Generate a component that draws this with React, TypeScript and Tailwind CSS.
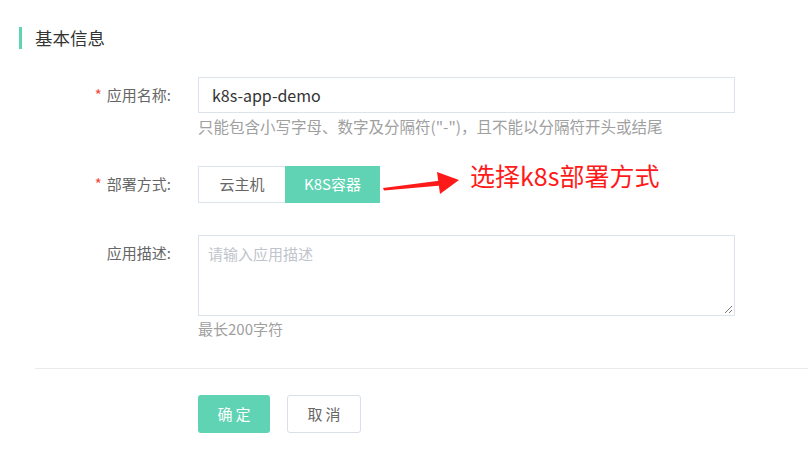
import React from 'react';

const font = { fontFamily: '"Noto Sans CJK SC", "Noto Sans", sans-serif' };

const Label: React.FC<{ text: string; required?: boolean }> = ({ text, required }) => (
  <div className="w-[198px] shrink-0 pr-[27px] flex justify-end items-center h-9 text-[15px] text-[#666]">
    {required && <span className="text-[#f5483b] mr-[5px]">*</span>}
    <span>{text}:</span>
  </div>
);

export default function App() {
  return (
    <div className="w-[808px] h-[469px] bg-white overflow-hidden" style={font}>
      <div className="flex items-center h-[22px] mt-[27px] ml-[19px]">
        <span className="w-[3px] h-[22px] bg-[#5fd3b3]"></span>
        <span className="ml-[13px] text-[17.5px] text-[#333]">基本信息</span>
      </div>

      <div className="mt-[28px]">
        <div className="flex">
          <Label text="应用名称" required />
          <div className="w-[537px]">
            <div className="h-9 border border-[#dde3ea] flex items-center px-[13px] text-[16px] text-[#333]">
              k8s-app-demo
            </div>
            <p className="mt-[3px] text-[15.5px] text-[#a0a0a0] leading-5 whitespace-nowrap">只能包含小写字母、数字及分隔符("-")，且不能以分隔符开头或结尾</p>
          </div>
        </div>

        <div className="flex mt-[30px] items-center">
          <Label text="部署方式" required />
          <div className="flex h-[37px]">
            <button className="w-[87px] h-[37px] border border-[#dde3ea] border-r-0 text-[15px] text-[#666] bg-white">云主机</button>
            <button className="w-[95px] h-[37px] border border-[#5fd3b3] text-[15px] text-white bg-[#5fd3b3]">K8S容器</button>
          </div>
          <div className="relative flex items-center">
            <svg width="82" height="26" viewBox="0 0 82 26" className="ml-[1px] -mt-[2px]">
              <path d="M2 17 L60 9.5 L60 14.5 L3 19.5 Z" fill="#ff1a1a" />
              <path d="M56 1 L78 9 L59 23 Z" fill="#ff1a1a" />
            </svg>
            <span className="ml-[7px] -mt-[20px] text-[25px] text-[#ff1a1a] leading-8">选择k8s部署方式</span>
          </div>
        </div>

        <div className="flex mt-[32px]">
          <Label text="应用描述" />
          <div className="w-[537px]">
            <div className="relative h-[81px] border border-[#dde3ea] px-[9px] pt-[7px] text-[15px] text-[#c0c4cc]">
              请输入应用描述
              <svg width="9" height="9" viewBox="0 0 9 9" className="absolute right-[1px] bottom-[1px]">
                <path d="M1 8 L8 1 M5 8 L8 5" stroke="#777" strokeWidth="1" />
              </svg>
            </div>
            <p className="mt-[3px] text-[15px] text-[#a0a0a0] leading-5">最长200字符</p>
          </div>
        </div>
      </div>

      <div className="ml-[35px] mt-[29px] border-t border-[#eaeaea]"></div>

      <div className="flex gap-[17px] ml-[198px] mt-[26px]">
        <button className="w-[72px] h-[38px] rounded-[3px] bg-[#5fd3b3] text-white text-[15px] tracking-[3px] pl-[3px]">确定</button>
        <button className="w-[74px] h-[38px] rounded-[3px] border border-[#d9e0ea] bg-white text-[#666] text-[15px] tracking-[3px] pl-[3px]">取消</button>
      </div>
    </div>
  );
}
